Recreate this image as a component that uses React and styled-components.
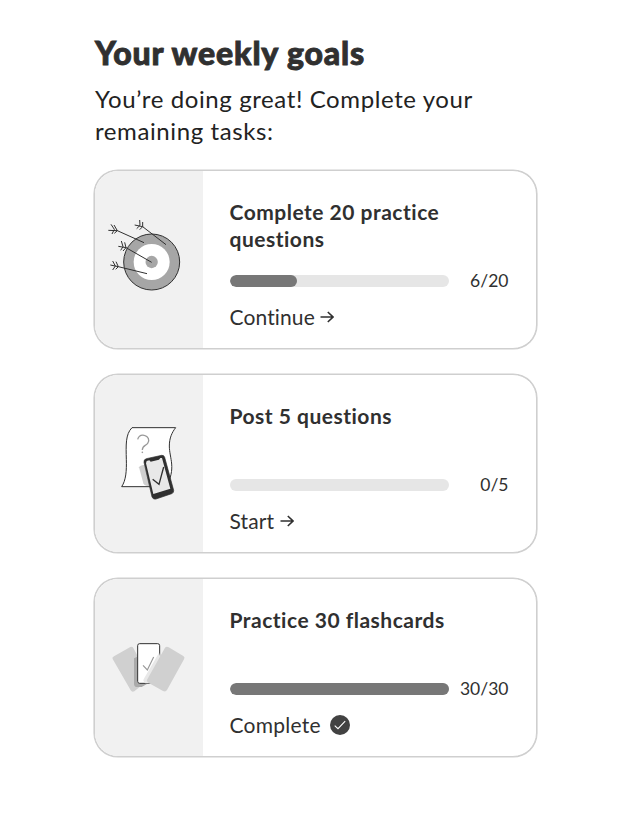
import React from "react";
import styled, { createGlobalStyle } from "styled-components";

const Global = createGlobalStyle`
  *, *::before, *::after { box-sizing: border-box; }
  body { margin: 0; background: #fff; color: #303030; font-family: Lato, "Noto Sans", sans-serif; }
`;

const Page = styled.main`
  min-height: 827px;
  padding: 33px 95.5px 0 94px;
  background: #fff;
`;

const Heading = styled.h1`
  margin: 0 0 0 1px;
  font-size: 32px;
  line-height: 40px;
  font-weight: 900;
  letter-spacing: 0.85px;
  -webkit-text-stroke: 0.9px #303030;
  white-space: nowrap;
`;

const Intro = styled.p`
  margin: 10px 0 23px 1px;
  font-size: 24px;
  line-height: 32px;
  letter-spacing: 0.6px;
  color: #222;
`;

const GoalList = styled.div`
  display: grid;
  gap: 25px;
`;

const Card = styled.section`
  display: flex;
  height: 179px;
  border: 1px solid #cfcfcf;
  border-radius: 24px;
  box-shadow: 0 0 0 0.6px #cfcfcf;
  overflow: hidden;
  background: #fff;
`;

const Side = styled.div`
  flex: 0 0 107.5px;
  padding-top: ${({ $top }) => $top}px;
  background: #f1f1f1;
`;

const Art = styled.svg`
  display: block;
  width: 108px;
  height: 110px;
`;

const Body = styled.div`
  flex: 1;
  display: flex;
  flex-direction: column;
  padding: 27px 27px 0 26.5px;
`;

const Title = styled.h2`
  margin: 0;
  height: 72.5px;
  font-size: 21px;
  line-height: 27px;
  font-weight: 700;
  letter-spacing: 0.5px;
`;

const ProgressRow = styled.div`
  display: flex;
  align-items: center;
  justify-content: space-between;
  height: 20px;
`;

const Track = styled.div`
  width: 219.5px;
  height: 12px;
  border-radius: 6px;
  overflow: hidden;
  background: #e6e6e6;
`;

const Fill = styled.div`
  height: 100%;
  border-radius: 6px;
  background: #777;
`;

const Count = styled.span`
  font-size: 17.5px;
  line-height: 20px;
`;

const Action = styled.div`
  display: flex;
  align-items: center;
  margin-top: 11.5px;
  height: 28px;
  font-size: 21px;
  letter-spacing: ${({ $complete }) => ($complete ? 0.25 : 0.12)}px;
`;

const ArrowIcon = styled.svg`
  width: 14px;
  height: 12px;
  margin: 2px 0 0 5.5px;
`;

const DoneIcon = styled.svg`
  width: 20px;
  height: 20px;
  margin: 1px 0 0 9px;
`;

const Arrow = () => (
  <ArrowIcon viewBox="0 0 14 12" fill="none" stroke="#303030" strokeWidth="1.6">
    <path d="M0.5 6H13M7.8 1L13 6L7.8 11" />
  </ArrowIcon>
);

const Done = () => (
  <DoneIcon viewBox="0 0 20 20" fill="none">
    <circle cx="10" cy="10" r="10" fill="#424242" />
    <path d="M4.7 10.6L8 13.7L15.2 6.2" stroke="#fff" strokeWidth="1.1" />
  </DoneIcon>
);

const TargetArt = () => (
  <Art viewBox="15 0 324 330" fill="none" stroke="#303030" strokeWidth="3">
    <circle cx="185" cy="186" r="84" fill="#a6a6a6" />
    <circle cx="185" cy="186" r="54" fill="#fff" stroke="none" />
    <circle cx="185" cy="186" r="18.5" fill="#a6a6a6" stroke="none" />
    <path d="M55 91L82 92L162 128M63 73L73 88L66 102M72 75L82 92L73 100" />
    <path d="M134 75L158 80L228 134M149 60L150 76L140 86M158 66L158 80L149 89" />
    <path d="M85 139L108 143L185 187M94 123L99 140L92 151M104 127L108 143L99 153" />
    <path d="M61 195L85 200L171 221M68 183L76 198L68 210M78 185L85 200L77 208" />
  </Art>
);

const QuizArt = () => (
  <Art viewBox="15 0 324 330" fill="none" stroke="#303030" strokeWidth="3">
    <path d="M126 53H257C246 67 238 84 238 108C238 145 260 175 228 230H95C108 211 110 182 109 149C108 106 106 73 126 53Z" fill="#fff" />
    <path d="M143 88C146 78 154 74 163 76C175 78 180 91 173 100C167 108 157 106 157 120" stroke="#999" strokeWidth="4" />
    <circle cx="157" cy="127" r="2.5" fill="#999" stroke="none" />
    <path d="M147 172Q147 167 163 164L180 228H171Q163 228 160 220Z" fill="#d0d0d0" stroke="none" />
    <path d="M169 146L215 136Q222 135 224 142L251 241Q252 249 245 251L198 267Q189 269 186 261L162 157Q161 148 169 146Z" fill="#303030" stroke="#303030" strokeWidth="2" />
    <path d="M170 153L178 151L182 155L207 149L211 144L216 144L241 236L190 252L168 160Z" fill="#e8e8e8" stroke="none" />
    <path d="M188 208L207 223L221 171" strokeWidth="4" />
  </Art>
);

const FlashcardArt = () => (
  <Art viewBox="15 0 324 330" fill="none">
    <path d="M72 109L121 81Q127 79 130 84L177 171Q180 177 174 181L133 214Q126 218 122 211L68 117Q65 112 72 109Z" fill="#d0d0d0" />
    <path d="M142 110L132 115V191Q132 201 142 201H155L175 190H142Z" fill="#aaa" />
    <rect x="143" y="71" width="66" height="119" rx="6" fill="#fff" stroke="#303030" strokeWidth="3" />
    <path d="M159 136L172 150L191 111" stroke="#999" strokeWidth="3.5" />
    <path d="M211 110L224 90L216 190H166Q156 183 163 174L207 98Z" fill="#e8e8e8" />
    <path d="M225 83Q230 78 236 82L280 108Q286 112 282 118L231 210Q227 217 219 213L175 188Q168 184 172 178Z" fill="#d0d0d0" />
  </Art>
);

const goals = [
  { title: "Complete 20 practice questions", done: 6, total: 20, action: "Continue", art: TargetArt, artTop: 29 },
  { title: "Post 5 questions", done: 0, total: 5, action: "Start", art: QuizArt, artTop: 35 },
  { title: "Practice 30 flashcards", done: 30, total: 30, action: "Complete", art: FlashcardArt, artTop: 41 },
];

const Goal = ({ title, done, total, action, art: Picture, artTop }) => (
  <Card>
    <Side $top={artTop}><Picture /></Side>
    <Body>
      <Title>{title}</Title>
      <ProgressRow>
        <Track>
          {done > 0 && <Fill style={{ width: `calc(${(done / total) * 100}% + 1.5px)` }} />}
        </Track>
        <Count>{done}/{total}</Count>
      </ProgressRow>
      <Action $complete={done === total}>
        {action}
        {done === total ? <Done /> : <Arrow />}
      </Action>
    </Body>
  </Card>
);

export default function App() {
  return (
    <>
      <Global />
      <Page>
        <Heading>Your weekly goals</Heading>
        <Intro>You’re doing great! Complete your remaining tasks:</Intro>
        <GoalList>
          {goals.map((goal) => <Goal key={goal.title} {...goal} />)}
        </GoalList>
      </Page>
    </>
  );
}
